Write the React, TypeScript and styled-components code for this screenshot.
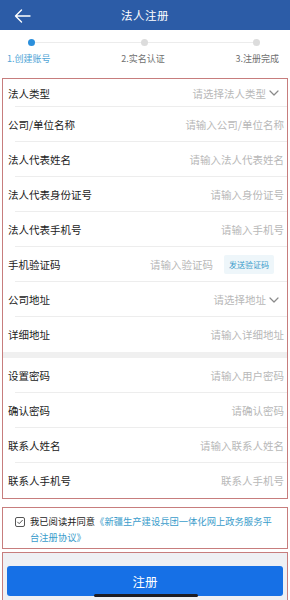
import styled, { createGlobalStyle } from "styled-components";

const GlobalStyle = createGlobalStyle`
  body {
    margin: 0;
    background: #ffffff;
    font-family: "Noto Sans CJK SC", "Noto Sans", sans-serif;
  }
`;

type Field = {
  label: string;
  placeholder: string;
  select?: boolean;
  code?: boolean;
};

const accountFields: Field[] = [
  { label: "法人类型", placeholder: "请选择法人类型", select: true },
  { label: "公司/单位名称", placeholder: "请输入公司/单位名称" },
  { label: "法人代表姓名", placeholder: "请输入法人代表姓名" },
  { label: "法人代表身份证号", placeholder: "请输入身份证号" },
  { label: "法人代表手机号", placeholder: "请输入手机号" },
  { label: "手机验证码", placeholder: "请输入验证码", code: true },
  { label: "公司地址", placeholder: "请选择地址", select: true },
  { label: "详细地址", placeholder: "请输入详细地址" },
];

const contactFields: Field[] = [
  { label: "设置密码", placeholder: "请输入用户密码" },
  { label: "确认密码", placeholder: "请确认密码" },
  { label: "联系人姓名", placeholder: "请输入联系人姓名" },
  { label: "联系人手机号", placeholder: "联系人手机号" },
];

const steps = ["1.创建账号", "2.实名认证", "3.注册完成"];

const ChevronDown = () => (
  <svg width="10" height="6" viewBox="0 0 10 6" fill="none">
    <path d="M1 1l4 4 4-4" stroke="#8a8a8a" strokeWidth="1.2" strokeLinecap="round" strokeLinejoin="round" />
  </svg>
);

const BackArrow = () => (
  <svg width="17" height="14" viewBox="0 0 17 14" fill="none">
    <path d="M16 7H1.5M7.5 1L1.5 7l6 6" stroke="#ffffff" strokeWidth="1.4" strokeLinecap="round" strokeLinejoin="round" />
  </svg>
);

const CheckBox = () => (
  <svg width="10" height="10" viewBox="0 0 10 10" fill="none">
    <rect x="0.5" y="0.5" width="9" height="9" rx="1.5" stroke="#555" />
    <path d="M2.6 5.1l1.6 1.6 3.2-3.4" stroke="#555" strokeWidth="1" strokeLinecap="round" strokeLinejoin="round" />
  </svg>
);

const renderRows = (fields: Field[], offset: number) =>
  fields.map((f, i) => (
    <Row key={f.label} $first={offset === 0 && i === 0} $last={i === fields.length - 1}>
      <Label>{f.label}</Label>
      <Value $select={!!f.select}>
        <Placeholder>{f.placeholder}</Placeholder>
        {f.select && <ChevronDown />}
        {f.code && <CodeButton>发送验证码</CodeButton>}
      </Value>
    </Row>
  ));

const App = () => {
  return (
    <Page>
      <GlobalStyle />
      <Header>
        <BackButton>
          <BackArrow />
        </BackButton>
        <Title>法人注册</Title>
      </Header>
      <Steps>
        <DotTrack>
          <Dot $active />
          <Connector />
          <Dot />
          <Connector />
          <Dot />
        </DotTrack>
        <StepLabels>
          {steps.map((s, i) => (
            <StepLabel key={s} $active={i === 0}>
              {s}
            </StepLabel>
          ))}
        </StepLabels>
      </Steps>
      <FormBox>
        {renderRows(accountFields, 0)}
        <Separator />
        {renderRows(contactFields, 1)}
      </FormBox>
      <AgreementBox>
        <CheckWrap>
          <CheckBox />
        </CheckWrap>
        <AgreementText>
          我已阅读并同意<AgreementLink>《新疆生产建设兵团一体化网上政务服务平台注册协议》</AgreementLink>
        </AgreementText>
      </AgreementBox>
      <SubmitBox>
        <SubmitButton>注册</SubmitButton>
        <HomeIndicator />
      </SubmitBox>
    </Page>
  );
};

const Page = styled.main`
  width: 290px;
  height: 600px;
  overflow: hidden;
  background: #ffffff;
`;

const Header = styled.header`
  height: 30px;
  background: #2c5ca7;
  display: flex;
  align-items: center;
  justify-content: center;
  position: relative;
`;

const BackButton = styled.div`
  position: absolute;
  left: 14px;
  top: 9px;
  display: flex;
`;

const Title = styled.h1`
  margin: 0;
  font-size: 11.5px;
  font-weight: 400;
  color: #ffffff;
  letter-spacing: 0.5px;
`;

const Steps = styled.div`
  height: 48px;
  padding-top: 9px;
  box-sizing: border-box;
  display: flex;
  flex-direction: column;
`;

const DotTrack = styled.div`
  display: flex;
  align-items: center;
  padding: 0 30px 0 28px;
`;

const Dot = styled.span<{ $active?: boolean }>`
  width: 7px;
  height: 7px;
  border-radius: 50%;
  background: ${(p) => (p.$active ? "#2b8fdc" : "#dcdcdc")};
  flex-shrink: 0;
`;

const Connector = styled.span`
  flex: 1;
  height: 1px;
  background: #ececec;
`;

const StepLabels = styled.div`
  display: flex;
  justify-content: space-between;
  padding: 0 11px 0 7px;
  margin-top: 7px;
`;

const StepLabel = styled.span<{ $active?: boolean }>`
  font-size: 9px;
  line-height: 12px;
  color: ${(p) => (p.$active ? "#4ea4d6" : "#707070")};
`;

const FormBox = styled.section`
  margin: 0 2px;
  border: 1px solid #c77d7d;
`;

const Row = styled.div<{ $first?: boolean; $last?: boolean }>`
  height: ${(p) => (p.$first ? 28 : 35)}px;
  display: flex;
  align-items: center;
  padding: 0 3px 0 5px;
  background: ${(p) =>
    p.$last ? "none" : "linear-gradient(#ededed, #ededed) no-repeat 12px 100% / calc(100% - 12px) 1px"};
`;

const Label = styled.span`
  font-size: 10.5px;
  color: #222222;
  white-space: nowrap;
`;

const Value = styled.div<{ $select?: boolean }>`
  flex: 1;
  display: flex;
  align-items: center;
  justify-content: flex-end;
  gap: 3px;
  padding-right: ${(p) => (p.$select ? 5 : 0)}px;
`;

const Placeholder = styled.span`
  font-size: 10.5px;
  color: #b8b8b8;
  white-space: nowrap;
`;

const CodeButton = styled.span`
  margin-left: 8px;
  margin-right: 10px;
  height: 19px;
  padding: 0 5px;
  display: flex;
  align-items: center;
  font-size: 8px;
  color: #3a9ccb;
  background: #eef6fa;
  border-radius: 2px;
`;

const Separator = styled.div`
  height: 6px;
  background: #f0f0f0;
`;

const AgreementBox = styled.section`
  margin: 8px 2px 0;
  border: 1px solid #c77d7d;
  padding: 6px 10px 3px 12px;
  display: flex;
  align-items: flex-start;
  gap: 5px;
`;

const CheckWrap = styled.div`
  padding-top: 3px;
  display: flex;
`;

const AgreementText = styled.p`
  margin: 0;
  font-size: 9.3px;
  line-height: 15.5px;
  color: #222222;
`;

const AgreementLink = styled.span`
  color: #3a9ccb;
`;

const SubmitBox = styled.section`
  margin: 3px 2px 0;
  border: 1px solid #c77d7d;
  background: #eef0f4;
  padding: 13px 4px 8px;
  position: relative;
`;

const SubmitButton = styled.button`
  width: 100%;
  height: 30px;
  border: none;
  border-radius: 3px;
  background: #1670e6;
  color: #ffffff;
  font-family: "Noto Sans CJK SC", "Noto Sans", sans-serif;
  font-size: 12.5px;
  display: flex;
  align-items: center;
  justify-content: center;
`;

const HomeIndicator = styled.span`
  position: absolute;
  left: 91px;
  bottom: 7px;
  width: 104px;
  height: 3px;
  border-radius: 2px;
  background: #1c1c24;
`;

export default App;
